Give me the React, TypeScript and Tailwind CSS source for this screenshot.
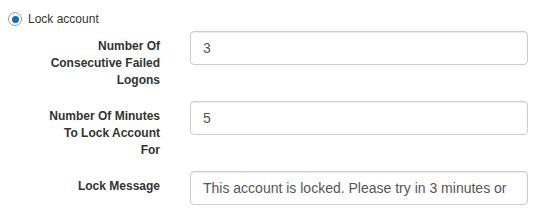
import React from 'react';

const rows = [
    { label: ['Number Of', 'Consecutive Failed', 'Logons'], value: '3' },
    { label: ['Number Of Minutes', 'To Lock Account', 'For'], value: '5' },
    { label: ['Lock Message'], value: 'This account is locked. Please try in 3 minutes or' },
];

export default function App() {
    return (
        <div className="w-[538px] h-[218px] bg-white text-[#333] font-['Liberation_Sans',Arial,sans-serif] overflow-hidden">
            {/* Radio */}
            <label className="flex items-center h-[14px] mt-[12px] ml-[8px] text-[12px] leading-[17px]">
                <span className="flex items-center justify-center w-[14px] h-[14px] rounded-full border border-[#9a9a9a] bg-white">
                    <span className="w-[7px] h-[7px] rounded-full bg-[#0b6fc2]" />
                </span>
                <span className="ml-[6px]">Lock account</span>
            </label>

            {/* Form rows */}
            <div className="mt-[5px] flex flex-col gap-[12px]">
                {rows.map((row) => (
                    <div key={row.value} className="flex items-start">
                        <div className="w-[160px] pt-[7px] text-right text-[12px] leading-[17px] font-bold">
                            {row.label.map((line) => (
                                <div key={line}>{line}</div>
                            ))}
                        </div>
                        <input
                            readOnly
                            value={row.value}
                            className="ml-[30px] w-[338px] h-[34px] px-[12px] py-[6px] text-[14px] text-[#555] border border-[#ccc] rounded-[4px] shadow-[inset_0_1px_1px_rgba(0,0,0,0.075)] outline-none bg-white"
                        />
                    </div>
                ))}
            </div>
        </div>
    );
}
